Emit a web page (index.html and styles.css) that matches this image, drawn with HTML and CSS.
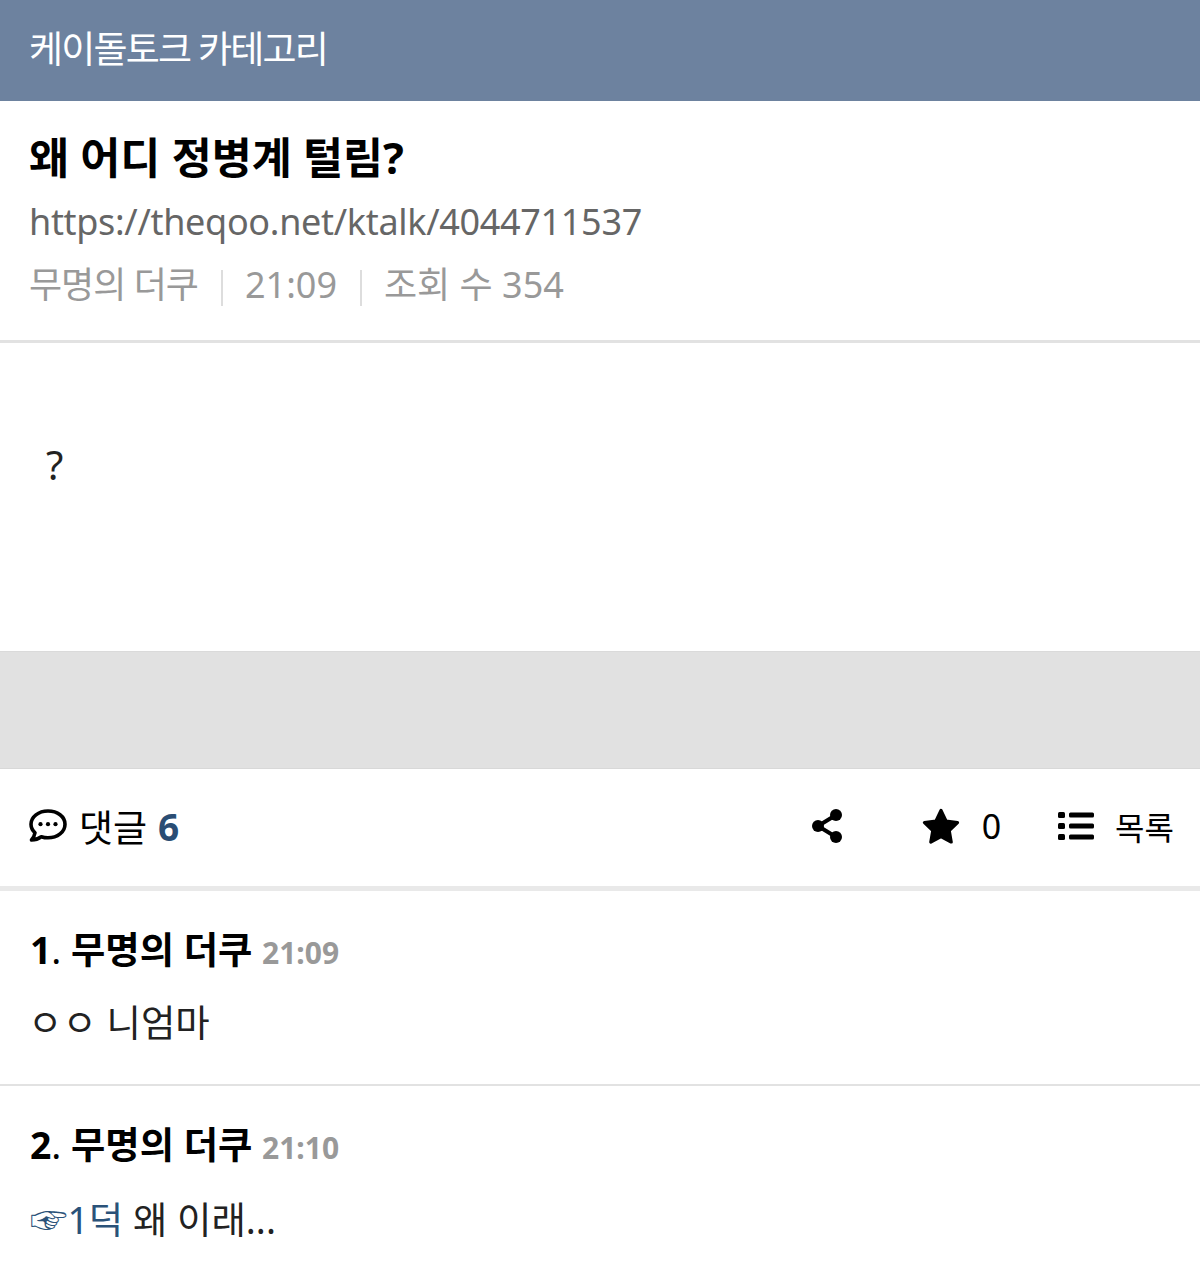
FILE: index.html
```html
<!DOCTYPE html>
<html lang="ko">
<head>
    <meta charset="UTF-8">
    <meta name="viewport" content="width=device-width, initial-scale=1.0">
    <title>왜 어디 정병계 털림?</title>
    <link rel="stylesheet" href="styles.css">
</head>
<body>
    <header class="cate-bar">케이돌토크 카테고리</header>

    <section class="post-head">
        <h1 class="post-title">왜 어디 정병계 털림?</h1>
        <div class="post-url">https://theqoo.net/ktalk/4044711537</div>
        <div class="post-meta">
            <span class="author">무명의 더쿠</span>
            <span class="sep"></span>
            <span>21:09</span>
            <span class="sep"></span>
            <span>조회 수 354</span>
        </div>
    </section>

    <section class="post-body">?</section>

    <div class="ad-band"></div>

    <div class="action-bar">
        <div class="reply-count">
            <svg class="icon-chat" viewBox="0 0 40 36" width="40" height="36">
                <path d="M20 3C10.500 3 3 8.900 3 16.200c0 3.300 1.500 6.200 4 8.500-.5 2.900-1.900 5.400-3.500 7.300 3.400-.1 7.100-1.300 9.800-3.300 2.100.7 4.400 1.100 6.700 1.100 9.500 0 17-5.900 17-13.600S29.500 3 20 3z" fill="none" stroke="#000" stroke-width="3.600" stroke-linejoin="round"/>
                <circle cx="12.500" cy="16.200" r="2.100" fill="#000"/>
                <circle cx="20" cy="16.200" r="2.100" fill="#000"/>
                <circle cx="27.500" cy="16.200" r="2.100" fill="#000"/>
            </svg>
            <span>댓글</span>
            <b class="count">6</b>
        </div>
        <div class="actions">
            <svg class="icon-share" viewBox="0 0 32 36" width="32" height="36">
                <path d="M25 7 7 18l18 11" fill="none" stroke="#000" stroke-width="4"/>
                <circle cx="25" cy="7" r="6" fill="#000"/>
                <circle cx="7" cy="18" r="6" fill="#000"/>
                <circle cx="25" cy="29" r="6" fill="#000"/>
            </svg>
            <div class="fav">
                <svg viewBox="0 0 38 36" width="38" height="36">
                    <path d="M19 2.500l5 10.500 11.500 1.600-8.300 8 2 11.400L19 28.600 8.800 34l2-11.400-8.300-8L14 13z" fill="#000" stroke="#000" stroke-width="3.200" stroke-linejoin="round"/>
                </svg>
                <span>0</span>
            </div>
            <div class="to-list">
                <svg viewBox="0 0 36 30" width="36" height="30">
                    <rect x="0" y="1" width="7" height="6" rx="1.500" fill="#000"/>
                    <rect x="0" y="12" width="7" height="6" rx="1.500" fill="#000"/>
                    <rect x="0" y="23" width="7" height="6" rx="1.500" fill="#000"/>
                    <rect x="11" y="1.500" width="25" height="5" rx="1.500" fill="#000"/>
                    <rect x="11" y="12.500" width="25" height="5" rx="1.500" fill="#000"/>
                    <rect x="11" y="23.500" width="25" height="5" rx="1.500" fill="#000"/>
                </svg>
                <span class="list-label">목록</span>
            </div>
        </div>
    </div>

    <ul class="comments">
        <li class="comment">
            <div class="comment-head"><b>1<i>.</i> 무명의 더쿠</b> <span class="time">21:09</span></div>
            <div class="comment-text plain">ㅇㅇ 니엄마</div>
        </li>
        <li class="comment">
            <div class="comment-head"><b>2<i>.</i> 무명의 더쿠</b> <span class="time">21:10</span></div>
            <div class="comment-text"><a href="#" class="ref"><span class="hand">☞</span>1덕</a> 왜 이래...</div>
        </li>
    </ul>
</body>
</html>
```

FILE: styles.css
```css
body {
    font-family: 'Noto Sans', 'Noto Sans CJK KR', sans-serif;
    margin: 0;
    background-color: #fff;
    color: #000;
    overflow: hidden;
}

.cate-bar {
    height: 101px;
    padding-left: 29px;
    box-sizing: border-box;
    background-color: #6d829f;
    color: #fff;
    font-size: 37px;
    line-height: 97px;
    letter-spacing: -1.8px;
}

.post-head {
    padding: 27px 29px 0;
    height: 242px;
    box-sizing: border-box;
    border-bottom: 3px solid #e2e2e2;
}

.post-title {
    margin: 0;
    font-size: 43.500px;
    line-height: 58px;
    font-weight: 700;
}

.post-url {
    margin-top: 7px;
    font-size: 36px;
    line-height: 58px;
    color: #666;
    letter-spacing: -0.32px;
}

.post-meta {
    display: flex;
    align-items: center;
    margin-top: 5px;
    font-size: 36px;
    line-height: 58px;
    color: #999;
}

.author {
    letter-spacing: -1px;
}

.sep {
    width: 2px;
    height: 36px;
    margin: 6px 22px 0 23px;
    background-color: #ddd;
}

.post-body {
    height: 308px;
    box-sizing: border-box;
    padding: 92px 0 0 46px;
    font-size: 40px;
    line-height: 60px;
    color: #222;
}

.ad-band {
    height: 116px;
    background-color: #e1e1e1;
    border-top: 1px solid #dadada;
    border-bottom: 1px solid #d8d8d8;
}

.action-bar {
    display: flex;
    justify-content: space-between;
    align-items: center;
    height: 114px;
    padding: 0 26px 3px 28px;
    border-bottom: 5px solid #e9e9e9;
}

.reply-count {
    display: flex;
    align-items: center;
    gap: 11px;
    font-size: 37px;
}

.reply-count .count {
    color: #2a4d74;
}

.actions {
    display: flex;
    align-items: center;
    font-size: 34px;
}

.fav {
    display: flex;
    align-items: center;
    gap: 22px;
    margin-left: 79px;
}

.to-list {
    display: flex;
    align-items: center;
    gap: 21px;
    margin-left: 57px;
}

.list-label {
    font-size: 32px;
}

.comments {
    list-style: none;
    margin: 0;
    padding: 0;
}

.comment {
    height: 195px;
    box-sizing: border-box;
    padding: 29px 30px 0;
    border-bottom: 2px solid #e2e2e2;
}

.comment:last-child {
    border-bottom: none;
}

.comment-head {
    font-size: 37.300px;
    line-height: 60px;
}

.comment-head i {
    font-style: normal;
    font-weight: 400;
}

.time {
    font-size: 30px;
    font-weight: 700;
    color: #999;
}

.comment-text {
    margin-top: 10px;
    font-size: 37.400px;
    line-height: 60px;
    color: #222;
}

.comment-text.plain {
    margin-left: -2px;
}

.ref {
    color: #2a5279;
    text-decoration: none;
}

.hand {
    font-family: 'Noto Sans CJK KR', sans-serif;
}
```
